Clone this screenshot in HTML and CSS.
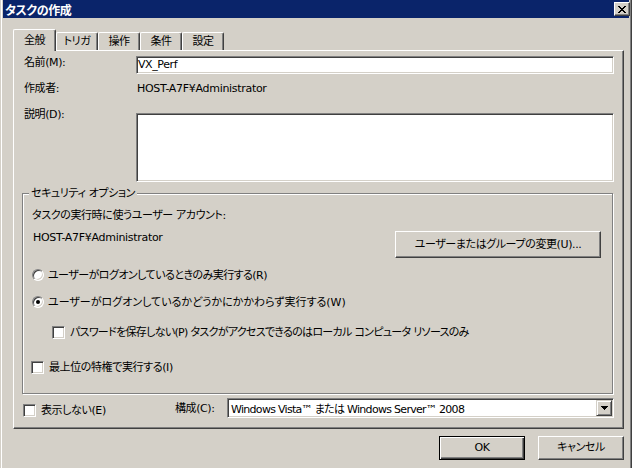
FILE: index.html
```html
<!DOCTYPE html>
<html lang="ja">
<head>
  <meta charset="UTF-8" />
  <title>タスクの作成</title>
  <link rel="stylesheet" href="styles.css">
</head>
<body>
  <div class="window">
    <div class="titlebar">
      <span class="title">タスクの作成</span>
      <span class="close-btn">
        <svg width="8" height="7" viewBox="0 0 8 7" shape-rendering="crispEdges"><path fill="#000" d="M0 0h2v1h-2z M6 0h2v1h-2z M1 1h2v1h-2z M5 1h2v1h-2z M2 2h4v1h-4z M3 3h2v1h-2z M2 4h4v1h-4z M1 5h2v1h-2z M5 5h2v1h-2z M0 6h2v1h-2z M6 6h2v1h-2z"/></svg>
      </span>
    </div>

    <div class="client">
      <div class="tabs">
        <div class="tab tab-selected">全般</div>
        <div class="tab">トリガ</div>
        <div class="tab">操作</div>
        <div class="tab">条件</div>
        <div class="tab tab-last">設定</div>
      </div>

      <div class="panel">
        <div class="field-row">
          <span class="field-label">名前(M):</span>
          <div class="textbox name-box">VX_Perf</div>
        </div>
        <div class="field-row author-row">
          <span class="field-label">作成者:</span>
          <span class="field-value">HOST-A7F¥Administrator</span>
        </div>
        <div class="field-row desc-row">
          <span class="field-label">説明(D):</span>
          <div class="textbox desc-box"></div>
        </div>

        <fieldset class="group">
          <legend>セキュリティ オプション</legend>
          <div>タスクの実行時に使うユーザー アカウント:</div>
          <div class="account-row">
            <span class="account-name">HOST-A7F¥Administrator</span>
            <button class="btn btn-change">ユーザーまたはグループの変更(U)...</button>
          </div>
          <div class="option opt-logon">
            <span class="radio"></span>
            <span>ユーザーがログオンしているときのみ実行する(R)</span>
          </div>
          <div class="option opt-always">
            <span class="radio checked"></span>
            <span>ユーザーがログオンしているかどうかにかかわらず実行する(W)</span>
          </div>
          <div class="option opt-nopass">
            <span class="check"></span>
            <span>パスワードを保存しない(P) タスクがアクセスできるのはローカル コンピュータ リソースのみ</span>
          </div>
          <div class="option opt-highest">
            <span class="check"></span>
            <span>最上位の特権で実行する(I)</span>
          </div>
        </fieldset>

        <div class="bottom-row">
          <div class="option opt-hide">
            <span class="check"></span>
            <span>表示しない(E)</span>
          </div>
          <span class="config-label">構成(C):</span>
          <div class="combo">
            <span class="combo-text">Windows Vista™ または Windows Server™ 2008</span>
            <span class="combo-arrow">
              <svg width="7" height="4" viewBox="0 0 7 4" shape-rendering="crispEdges"><path fill="#000" d="M0 0h7v1h-7z M1 1h5v1h-5z M2 2h3v1h-3z M3 3h1v1h-1z"/></svg>
            </span>
          </div>
        </div>
      </div>

      <div class="dialog-buttons">
        <button class="btn btn-dialog btn-default">OK</button>
        <button class="btn btn-dialog">キャンセル</button>
      </div>
    </div>
  </div>
</body>
</html>
```

FILE: styles.css
```css
* {
  box-sizing: border-box;
}

body {
  margin: 0;
  background: #d4d0c8;
  font-family: "DejaVu Sans", "Noto Sans CJK JP", sans-serif;
  font-size: 11px;
  line-height: 12px;
  letter-spacing: -0.4px;
  color: #000;
  font-feature-settings: "palt";
}

.window {
  width: 632px;
  height: 468px;
  padding: 0 3px;
  background: #d4d0c8;
  box-shadow: inset 1px 0 #d4d0c8, inset 2px 0 #fff, inset -1px 0 #404040, inset -2px 0 #808080;
  overflow: hidden;
}

/* title bar */
.titlebar {
  display: flex;
  align-items: flex-start;
  height: 18px;
  background: #0a246a;
  color: #fff;
}

.title {
  margin: 5px 0 0 2px;
  font-size: 12px;
  font-weight: bold;
}

.close-btn {
  display: flex;
  align-items: center;
  justify-content: center;
  width: 16px;
  height: 14px;
  margin: 2px -1px 0 auto;
  background: #d4d0c8;
  border: 1px solid;
  border-color: #fff #404040 #404040 #fff;
  box-shadow: inset -1px -1px #808080;
}

/* tabs */
.client {
  padding: 11px 0 0 10px;
}

.tabs {
  display: flex;
  align-items: flex-end;
  height: 21px;
}

.tab {
  width: 42px;
  height: 18px;
  padding-top: 3px;
  text-align: center;
  border: 1px solid;
  border-bottom: 0;
  border-color: #fff #404040 #404040 #fff;
  border-radius: 2px 2px 0 0;
  box-shadow: inset -1px 0 #808080;
}

.tab-selected {
  position: relative;
  z-index: 1;
  width: 43px;
  height: 22px;
  margin-bottom: -1px;
  padding-top: 5px;
  background: #d4d0c8;
}

.panel {
  width: 611px;
  height: 379px;
  padding: 5px 9px 0 8px;
  border: 1px solid;
  border-color: #fff #404040 #404040 #fff;
  box-shadow: inset -1px -1px #808080;
}

/* general fields */
.field-row {
  display: flex;
  align-items: flex-start;
  padding-left: 2px;
}

.field-label {
  width: 112px;
  flex: none;
  padding-top: 1px;
}

.field-value {
  padding: 1px 0 0 1px;
  letter-spacing: -0.3px;
}

.author-row {
  margin-top: 8px;
}

.desc-row {
  margin-top: 13px;
}

.textbox {
  flex: 1;
  height: 18px;
  padding: 2px 1px 0;
  background: #fff;
  border: 1px solid;
  border-color: #808080 #fff #fff #808080;
  box-shadow: inset 1px 1px #404040, inset -1px -1px #d4d0c8;
}

.desc-box {
  height: 69px;
  margin-top: 5px;
}

/* security group */
.group {
  width: 591px;
  margin: 5px 0 0;
  padding: 10px 11px 19px 9px;
  border: 1px solid #808080;
  box-shadow: 1px 1px #fff, inset 1px 1px #fff;
}

.group legend {
  margin-left: -3px;
  padding: 1px 2px 0;
  line-height: 12px;
  background: #d4d0c8;
}

.account-row {
  display: flex;
  align-items: flex-start;
  margin-top: 9px;
}

.account-name {
  margin: 1px 0 0 1px;
  letter-spacing: -0.3px;
}

.btn {
  padding: 0;
  font: inherit;
  letter-spacing: inherit;
  color: #000;
  background: #d4d0c8;
  border: 1px solid;
  border-color: #fff #404040 #404040 #fff;
  box-shadow: inset -1px -1px #808080;
}

.btn-change {
  width: 206px;
  height: 27px;
  margin-left: auto;
}

.option {
  display: flex;
  align-items: flex-start;
}

.option > span:last-child {
  padding-top: 1px;
}

.radio {
  position: relative;
  flex: none;
  width: 12px;
  height: 12px;
  margin-right: 4px;
  background: #fff;
  border: 1px solid;
  border-color: #808080 #fff #fff #808080;
  border-radius: 50%;
  box-shadow: inset 1px 1px #404040, inset -1px -1px #d4d0c8;
}

.radio.checked::after {
  content: "";
  position: absolute;
  left: 3px;
  top: 3px;
  width: 4px;
  height: 4px;
  background: #000;
  border-radius: 50%;
}

.check {
  flex: none;
  width: 13px;
  height: 13px;
  margin-right: 5px;
  background: #fff;
  border: 1px solid;
  border-color: #808080 #fff #fff #808080;
  box-shadow: inset 1px 1px #404040, inset -1px -1px #d4d0c8;
}

.opt-logon {
  margin-top: 11px;
  letter-spacing: -0.55px;
}

.opt-always {
  margin-top: 14px;
  letter-spacing: 0;
}

.opt-nopass {
  margin: 17px 0 0 20px;
  letter-spacing: -0.7px;
}

.opt-highest {
  margin: 22px 0 0 -1px;
}

/* bottom row */
.bottom-row {
  display: flex;
  align-items: flex-start;
  margin-top: 4px;
}

.opt-hide {
  width: 152px;
  margin: 6px 0 0 1px;
}

.config-label {
  width: 52px;
  margin-top: 5px;
}

.combo {
  flex: 1;
  display: flex;
  height: 20px;
  background: #fff;
  border: 1px solid;
  border-color: #808080 #fff #fff #808080;
  box-shadow: inset 1px 1px #404040, inset -1px -1px #d4d0c8;
  padding: 1px;
}

.combo-text {
  flex: 1;
  padding: 4px 0 0 2px;
  letter-spacing: -0.7px;
}

.combo-arrow {
  display: flex;
  align-items: center;
  justify-content: center;
  width: 16px;
  height: 16px;
  background: #d4d0c8;
  border: 1px solid;
  border-color: #d4d0c8 #404040 #404040 #d4d0c8;
  box-shadow: inset 1px 1px #fff, inset -1px -1px #808080;
}

/* OK / cancel */
.dialog-buttons {
  display: flex;
  justify-content: flex-end;
  gap: 13px;
  width: 611px;
  margin-top: 7px;
}

.btn-dialog {
  width: 86px;
  height: 24px;
}

.btn-default {
  border: 1px solid #000;
  box-shadow: inset 1px 1px #fff, inset -1px -1px #404040, inset -2px -2px #808080;
}
```
